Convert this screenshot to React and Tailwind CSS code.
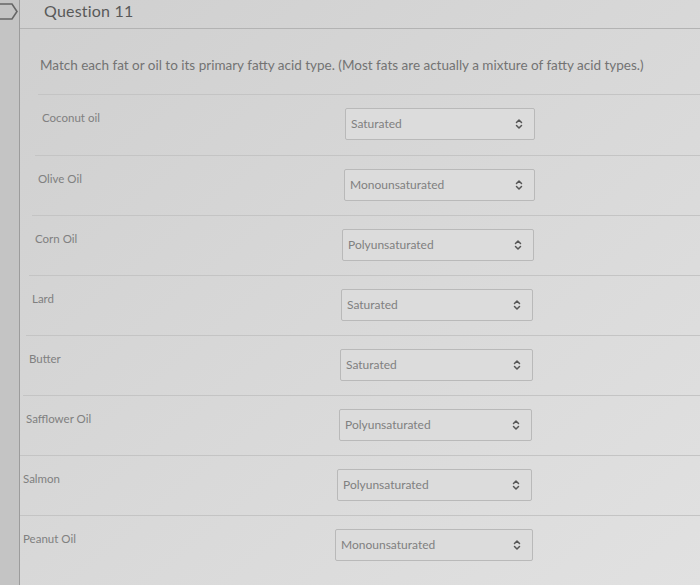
import { ChevronsUpDown } from "lucide-react";

const rows = [
  { label: "Coconut oil", value: "Saturated", row: "ml-[19px]", cell: "w-[306px]", sel: "w-[190px]" },
  { label: "Olive Oil", value: "Monounsaturated", row: "ml-[15px]", cell: "w-[309px]", sel: "w-[191px]" },
  { label: "Corn Oil", value: "Polyunsaturated", row: "ml-[12px]", cell: "w-[310px]", sel: "w-[192px]" },
  { label: "Lard", value: "Saturated", row: "ml-[9px]", cell: "w-[312px]", sel: "w-[192px]" },
  { label: "Butter", value: "Saturated", row: "ml-[6px]", cell: "w-[314px]", sel: "w-[193px]" },
  { label: "Safflower Oil", value: "Polyunsaturated", row: "ml-[3px]", cell: "w-[316px]", sel: "w-[193px]" },
  { label: "Salmon", value: "Polyunsaturated", row: "ml-[0px]", cell: "w-[317px]", sel: "w-[195px]" },
  { label: "Peanut Oil", value: "Monounsaturated", row: "ml-[0px]", cell: "w-[315px]", sel: "w-[198px]" },
];

function SelectBox({ value, cls }) {
  return (
    <div
      className={`${cls} h-[32px] shrink-0 flex items-center justify-between border border-[#b9b9b9] bg-[#dcdcdc] pl-[5px] pr-[9px] rounded-[2px]`}
    >
      <span className="text-[12px] text-[#808080]">{value}</span>
      <ChevronsUpDown size={12} strokeWidth={3} className="text-[#555]" />
    </div>
  );
}

export default function App() {
  return (
    <div
      className="w-[700px] h-[585px] flex overflow-hidden bg-linear-to-br from-[#cfcfcf] via-[#d8d8d8] to-[#e1e1e1]"
      style={{ fontFamily: "Lato, 'Open Sans', sans-serif" }}
    >
      {/* Left strip */}
      <div className="w-[20px] shrink-0 bg-[#c4c4c4] border-r border-[#9c9c9c] pt-[2px]">
        <svg width="20" height="19" viewBox="0 0 20 19" className="block">
          <path d="M0 2 H12 L17 9.5 L12 17 H0" fill="none" stroke="#666" strokeWidth="1.6" />
        </svg>
      </div>

      <div className="flex-1 flex flex-col">
        {/* Header */}
        <div className="h-[29px] shrink-0 border-b border-[#b3b3b3] pl-[24px] pt-[1px] flex items-start">
          <span className="text-[16px] leading-[20px] text-[#595959] tracking-[0.2px]">Question 11</span>
        </div>

        <div className="ml-[18px] h-[66px] flex items-center pl-[2px] pt-[7px] border-b border-[#c4c4c4]">
          <span className="text-[13.5px] text-[#737373] whitespace-nowrap">
            Match each fat or oil to its primary fatty acid type. (Most fats are actually a mixture of fatty acid types.)
          </span>
        </div>

        {rows.map((r, i) => (
          <div
            key={r.label}
            className={`${r.row} h-[60px] shrink-0 flex items-start ${i > 0 ? "border-t border-[#c4c4c4]" : ""}`}
          >
            <div className={`${r.cell} shrink-0 pl-[3px] pt-[14px] whitespace-nowrap text-[11.5px] text-[#808080]`}>
              {r.label}
            </div>
            <div className="mt-[13px] flex">
              <SelectBox value={r.value} cls={r.sel} />
            </div>
          </div>
        ))}
      </div>
    </div>
  );
}
